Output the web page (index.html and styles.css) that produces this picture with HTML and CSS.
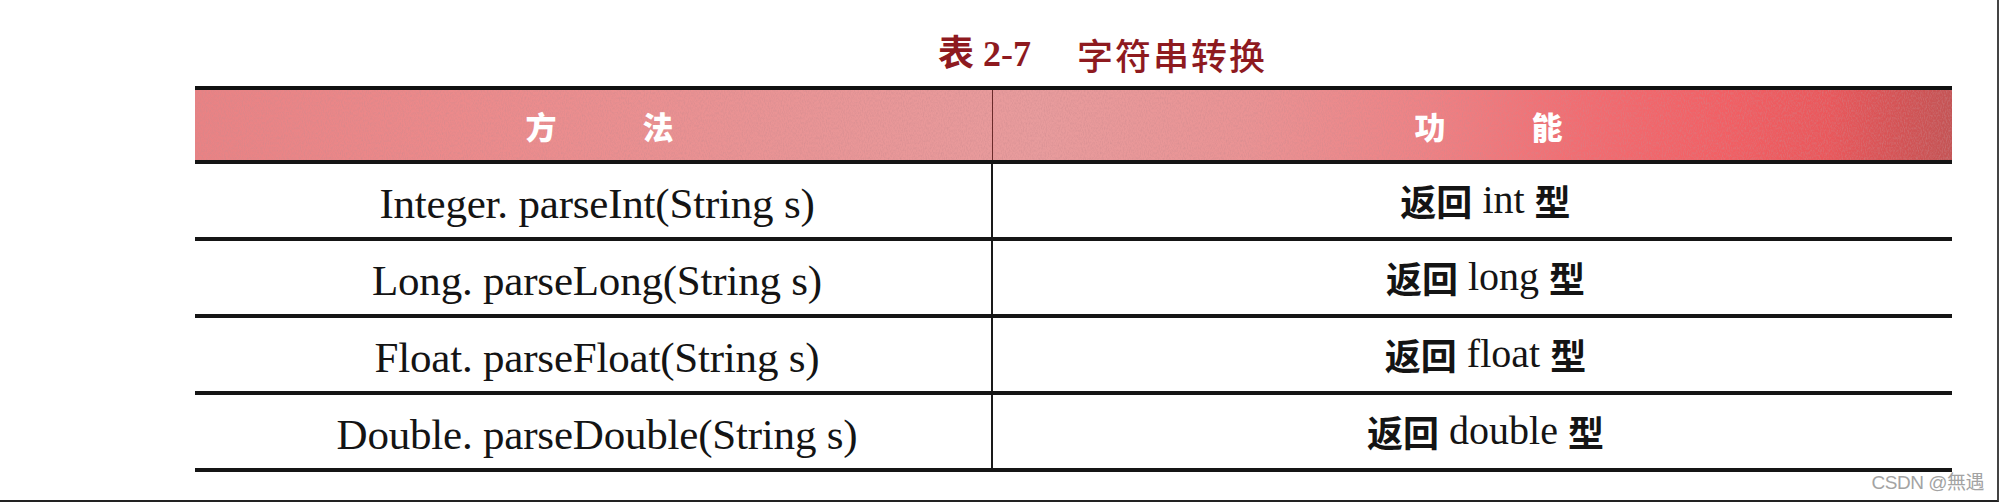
FILE: index.html
```html
<!DOCTYPE html>
<html lang="zh">
<head>
<meta charset="utf-8">
<title>表 2-7 字符串转换</title>
<link rel="stylesheet" href="styles.css">
</head>
<body>
<div class="page">
  <h1 class="title"><span class="num">表 2-7</span><span class="name">字符串转换</span></h1>
  <div class="table">
    <div class="row head">
      <svg class="noise" width="1757" height="70" aria-hidden="true">
        <filter id="grain" x="0" y="0" width="100%" height="100%">
          <feTurbulence type="fractalNoise" baseFrequency="0.95 0.4" numOctaves="2" seed="7"/>
          <feColorMatrix type="matrix" values="0 0 0 0 0.6  0 0 0 0 0.25  0 0 0 0 0.27  2.2 0 0 0 -0.85"/>
        </filter>
        <rect width="1757" height="70" filter="url(#grain)"/>
      </svg>
      <div class="cell c1"><span>方</span><span>法</span></div>
      <div class="cell c2"><span>功</span><span>能</span></div>
    </div>
    <div class="row">
      <div class="cell c1">Integer. parseInt(String s)</div>
      <div class="cell c2"><span class="cjk">返回</span>&nbsp;int&nbsp;<span class="cjk">型</span></div>
    </div>
    <div class="row">
      <div class="cell c1">Long. parseLong(String s)</div>
      <div class="cell c2"><span class="cjk">返回</span>&nbsp;long&nbsp;<span class="cjk">型</span></div>
    </div>
    <div class="row">
      <div class="cell c1">Float. parseFloat(String s)</div>
      <div class="cell c2"><span class="cjk">返回</span>&nbsp;float&nbsp;<span class="cjk">型</span></div>
    </div>
    <div class="row">
      <div class="cell c1">Double. parseDouble(String s)</div>
      <div class="cell c2"><span class="cjk">返回</span>&nbsp;double&nbsp;<span class="cjk">型</span></div>
    </div>
  </div>
  <div class="watermark">CSDN @無遇</div>
</div>
</body>
</html>
```
FILE: styles.css
```css
html, body {
  margin: 0;
  padding: 0;
  background: #fff;
}
.page {
  position: relative;
  width: 1999px;
  height: 502px;
  box-sizing: border-box;
  border-right: 2px solid #444;
  border-bottom: 2px solid #222;
  background: #fff;
  overflow: hidden;
}
.title {
  margin: 0;
  height: 64px;
  padding: 22px 0 0 938px;
  display: flex;
  align-items: center;
  gap: 46px;
  font-family: "Noto Sans CJK SC", sans-serif;
  font-weight: 500;
  font-size: 36px;
  color: #8e1a1f;
  line-height: 1;
}
.title .num {
  font-family: "Liberation Serif", "Noto Sans CJK SC", serif;
  font-weight: 700;
}
.title .name {
  letter-spacing: 2px;
}
.table {
  margin-left: 195px;
  width: 1757px;
  border-top: 4px solid #111;
}
.row {
  position: relative;
  display: flex;
  height: 73px;
  border-bottom: 4px solid #151515;
}
.cell {
  position: relative;
  z-index: 1;
  display: flex;
  align-items: center;
  justify-content: center;
}
.c1 {
  box-sizing: border-box;
  width: 798px;
  padding-left: 8px;
  padding-top: 6px;
  border-right: 2px solid #1a1a1a;
  font-family: "Liberation Serif", serif;
  font-size: 43px;
  letter-spacing: -0.2px;
  color: #141414;
}
.c2 {
  flex: 1;
  padding-left: 26px;
  padding-bottom: 2px;
  font-family: "Liberation Serif", serif;
  font-size: 40px;
  color: #141414;
}
.cjk {
  font-family: "Noto Sans CJK SC", sans-serif;
  font-weight: 700;
  font-size: 36px;
}
.head {
  height: 70px;
  background: linear-gradient(90deg, #e98284 0%, #ec8a8b 15%, #e99596 35%, #e89c9d 48%, #ea9394 60%, #ee8285 70%, #f26c71 79%, #f25f64 87%, #ea575b 93%, #d45355 97%, #c45455 100%);
}
.noise {
  position: absolute;
  left: 0;
  top: 0;
  opacity: 0.45;
}
.head .cell {
  font-family: "Noto Sans CJK SC", sans-serif;
  font-weight: 900;
  font-size: 31px;
  letter-spacing: 0;
  color: #fff;
  gap: 86px;
  padding-top: 0;
  padding-bottom: 0;
}
.head .c1 {
  padding-left: 12px;
  border-right: 1px solid #6a2a2a;
}
.head .c2 {
  padding-left: 32px;
}
.watermark {
  position: absolute;
  right: 13px;
  bottom: 6px;
  font-family: "Liberation Sans", "Noto Sans CJK SC", sans-serif;
  font-size: 19px;
  color: #a3a3a3;
  letter-spacing: -0.5px;
}
```
